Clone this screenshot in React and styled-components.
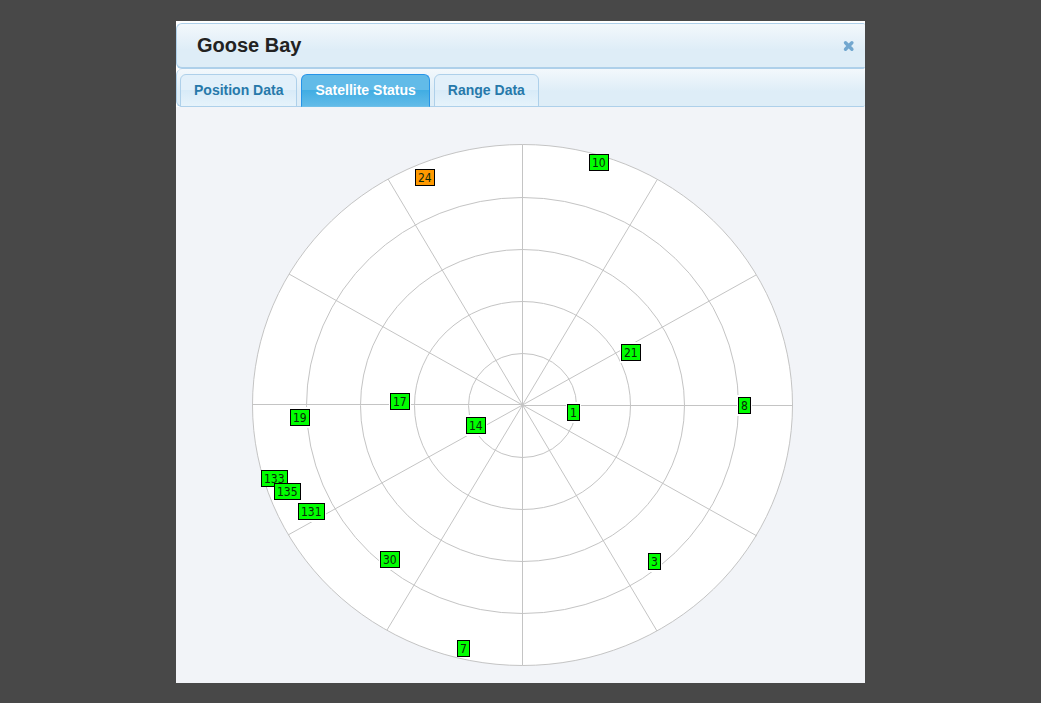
import React, { useState } from "react";
import styled, { createGlobalStyle } from "styled-components";

const GlobalStyle = createGlobalStyle`
  * { box-sizing: border-box; }
  body {
    margin: 0;
    background: #484848;
    font-family: "Liberation Sans", Arial, sans-serif;
  }
`;

const Page = styled.main`
  padding: 21px 176px 20px;
`;

const Dialog = styled.section`
  min-width: 600px;
  padding-top: 2px;
  background: #fff;
  overflow: hidden;
`;

const TitleBar = styled.header`
  display: flex;
  align-items: center;
  justify-content: space-between;
  height: 46px;
  padding: 0 10px 0 20px;
  border: 1px solid #aed0ea;
  border-width: 1px 0 2px 1px;
  border-radius: 6px 2px 2px 6px;
  background: linear-gradient(#f3f8fc, #deedf7 60%, #deedf7);
`;

const Title = styled.h1`
  margin: 0;
  padding-bottom: 2px;
  font-size: 20px;
  line-height: 24px;
  color: #222;
`;

const CloseButton = styled.button`
  display: flex;
  padding: 0;
  border: 0;
  background: none;
  cursor: pointer;
`;

const TabBar = styled.nav`
  display: flex;
  align-items: flex-end;
  gap: 4px;
  height: 38px;
  padding: 0 3px;
  border: 1px solid #aed0ea;
  border-width: 0 0 1px 1px;
  border-radius: 6px 2px 2px 6px;
  background: linear-gradient(#f3f8fc, #deedf7 60%, #deedf7);
`;

const Tab = styled.button`
  height: 33px;
  padding: 0 13px 1px;
  margin-bottom: -1px;
  border: 1px solid ${(p) => (p.$active ? "#2694e8" : "#aed0ea")};
  border-bottom-color: ${(p) => (p.$active ? "#6fbfe9" : "#aed0ea")};
  border-radius: 6px 6px 0 0;
  background: ${(p) =>
    p.$active
      ? "linear-gradient(#62bbe8 0 50%, #41ade3 50%, #62bbe8)"
      : "linear-gradient(#e2f0fa 0 50%, #d8ebf8 50%, #e6f3fb)"};
  color: ${(p) => (p.$active ? "#fff" : "#2779aa")};
  font: bold 14px/16px "Liberation Sans", Arial, sans-serif;
  cursor: pointer;
`;

const Panel = styled.div`
  display: flex;
  justify-content: center;
  padding: 37px 0 17px 4px;
  background: #f2f4f8;
`;

const SkyPlot = styled.div`
  position: relative;
`;

const Grid = styled.svg`
  display: block;
`;

const Marker = styled.span`
  position: absolute;
  height: 17px;
  padding: 0 2px;
  border: 1px solid #000;
  background: ${(p) => (p.$warn ? "#ff9900" : "#00ff00")};
  color: #0a280a;
  font-family: "DejaVu Sans Condensed", Tahoma, sans-serif;
  font-size: 12px;
  line-height: 16px;
`;

const rings = [1, 2, 3, 4];
const spokes = [
  [136, 35], [405, 36], [504, 131], [505, 392],
  [405, 487], [135, 486], [36, 391], [37, 130],
];

const satellites = [
  { id: 24, x: 163, y: 25, warn: true },
  { id: 10, x: 337, y: 10 },
  { id: 21, x: 369, y: 200 },
  { id: 8, x: 486, y: 253 },
  { id: 17, x: 138, y: 249 },
  { id: 19, x: 38, y: 265 },
  { id: 14, x: 214, y: 273 },
  { id: 1, x: 315, y: 260 },
  { id: 133, x: 9, y: 326 },
  { id: 135, x: 22, y: 339 },
  { id: 131, x: 46, y: 359 },
  { id: 30, x: 128, y: 407 },
  { id: 3, x: 396, y: 409 },
  { id: 7, x: 205, y: 496 },
];

const tabs = ["Position Data", "Satellite Status", "Range Data"];

export default function App() {
  const [active, setActive] = useState("Satellite Status");
  return (
    <Page>
      <GlobalStyle />
      <Dialog role="dialog" aria-labelledby="station">
        <TitleBar>
          <Title id="station">Goose Bay</Title>
          <CloseButton aria-label="Close">
            <svg width="13" height="12" viewBox="0 0 13 12">
              <path
                d="M3.5 2.8L9.9 9.2M9.9 2.8L3.5 9.2"
                stroke="#72a7cf"
                strokeWidth="3.4"
                strokeLinecap="round"
              />
            </svg>
          </CloseButton>
        </TitleBar>
        <TabBar role="tablist">
          {tabs.map((name) => (
            <Tab
              key={name}
              role="tab"
              aria-selected={name === active}
              $active={name === active}
              onClick={() => setActive(name)}
            >
              {name}
            </Tab>
          ))}
        </TabBar>
        <Panel role="tabpanel">
          <SkyPlot>
            <Grid width="541" height="522" viewBox="0 0 541 522" fill="none" stroke="#c4c4c4">
              <clipPath id="sky">
                <ellipse cx="270.5" cy="261" rx="269" ry="259.5" />
              </clipPath>
              <ellipse cx="270.5" cy="261" rx="270" ry="260.5" fill="#fff" />
              {rings.map((n) => (
                <ellipse key={n} cx="270.5" cy="261.5" rx={n * 54} ry={n * 52} />
              ))}
              <path d="M270.5 0.5V521.5M0.5 260.5H270.5V261.5H540.5" />
              {spokes.map(([x, y]) => (
                <path key={`${x}-${y}`} d={`M270.5 261L${x} ${y}`} />
              ))}
              <g clipPath="url(#sky)" fill="#fff" stroke="none">
                {satellites.map((s) => (
                  <rect
                    key={s.id}
                    x={s.x - 1}
                    y={s.y - 2}
                    width={8 + 7 * String(s.id).length}
                    height="21"
                  />
                ))}
              </g>
            </Grid>
            {satellites.map((s) => (
              <Marker key={s.id} $warn={s.warn} style={{ left: s.x, top: s.y }}>
                {s.id}
              </Marker>
            ))}
          </SkyPlot>
        </Panel>
      </Dialog>
    </Page>
  );
}
